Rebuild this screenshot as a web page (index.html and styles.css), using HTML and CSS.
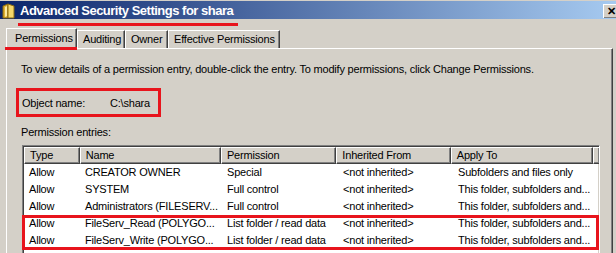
FILE: index.html
```html
<!DOCTYPE html>
<html>
<head>
<meta charset="utf-8">
<link rel="stylesheet" href="styles.css">
</head>
<body>
<div class="window">
  <div class="titlebar">
    <svg class="folder" width="14" height="16" viewBox="0 0 14 16">
      <path d="M1 3 L6 1 L6 15 L1 15 Z" fill="#e0b030" stroke="#8a6a10" stroke-width="1"/>
      <path d="M6 1 L12 3 L12 15 L6 15 Z" fill="#f5d76a" stroke="#8a6a10" stroke-width="1"/>
      <path d="M3 4 L5 3 L5 13 L3 14 Z" fill="#fbe9a0"/>
    </svg>
    <span class="title">Advanced Security Settings for shara</span>
    <span class="close">✕</span>
    <span class="mark mark-title"></span>
  </div>
  <div class="tabs">
    <div class="tab tab-perm active">Permissions<span class="mark mark-tab"></span></div>
    <div class="tab tab-aud">Auditing</div>
    <div class="tab tab-own">Owner</div>
    <div class="tab tab-eff">Effective Permissions</div>
  </div>
  <div class="panel">
    <p class="intro">To view details of a permission entry, double-click the entry. To modify permissions, click Change Permissions.</p>
    <div class="objname"><span class="objlabel">Object name:</span><span>C:\shara</span></div>
    <p class="entries">Permission entries:</p>
    <div class="list">
      <div class="row head">
        <div class="c c1">Type</div><div class="c c2">Name</div><div class="c c3">Permission</div><div class="c c4">Inherited From</div><div class="c c5">Apply To</div><div class="c filler"></div>
      </div>
      <div class="row"><div class="c c1">Allow</div><div class="c c2">CREATOR OWNER</div><div class="c c3">Special</div><div class="c c4">&lt;not inherited&gt;</div><div class="c c5">Subfolders and files only</div></div>
      <div class="row"><div class="c c1">Allow</div><div class="c c2">SYSTEM</div><div class="c c3">Full control</div><div class="c c4">&lt;not inherited&gt;</div><div class="c c5">This folder, subfolders and...</div></div>
      <div class="row"><div class="c c1">Allow</div><div class="c c2">Administrators (FILESERV...</div><div class="c c3">Full control</div><div class="c c4">&lt;not inherited&gt;</div><div class="c c5">This folder, subfolders and...</div></div>
      <div class="group">
        <div class="row"><div class="c c1">Allow</div><div class="c c2">FileServ_Read (POLYGO...</div><div class="c c3">List folder / read data</div><div class="c c4">&lt;not inherited&gt;</div><div class="c c5">This folder, subfolders and...</div></div>
        <div class="row"><div class="c c1">Allow</div><div class="c c2">FileServ_Write (POLYGO...</div><div class="c c3">List folder / read data</div><div class="c c4">&lt;not inherited&gt;</div><div class="c c5">This folder, subfolders and...</div></div>
      </div>
      <div class="row"></div>
    </div>
  </div>
</div>
</body>
</html>
```
FILE: styles.css
```css
html, body {
  margin: 0;
  padding: 0;
  height: 253px;
  overflow: hidden;
  background: #d4d0c8;
}
.window {
  font-family: "Liberation Sans", Arial, sans-serif;
  font-size: 11px;
  letter-spacing: -0.2px;
  color: #000;
  position: relative;
  padding-top: 1px;
  height: 252px;
  overflow: hidden;
}
.titlebar {
  position: relative;
  height: 18px;
  background: linear-gradient(to right, #0a246a, #a6caf0);
  display: flex;
  align-items: center;
}
.folder {
  margin-left: 2px;
  margin-top: 1px;
}
.title {
  margin-left: 4px;
  color: #fff;
  font-weight: bold;
  font-size: 13px;
  letter-spacing: -0.5px;
}
.close {
  margin-left: auto;
  width: 14px;
  height: 13px;
  margin-top: 1px;
  background: #d4d0c8;
  border-top: 1px solid #fff;
  border-left: 1px solid #fff;
  box-shadow: inset -1px -1px #808080;
  font-size: 11px;
  font-weight: bold;
  letter-spacing: 0;
  line-height: 13px;
  text-align: center;
  margin-right: -2px;
}
.mark {
  position: absolute;
  background: #e8141c;
}
.mark-title {
  left: 18px;
  top: 22px;
  width: 220px;
  height: 3px;
}
.tabs {
  display: flex;
  align-items: flex-end;
  margin-top: 9px;
  padding-left: 6px;
  height: 20px;
  position: relative;
  z-index: 1;
}
.tab {
  position: relative;
  height: 18px;
  line-height: 17px;
  border-top: 1px solid #fff;
  border-left: 1px solid #fff;
  border-right: 1px solid #404040;
  box-shadow: inset -1px 0 #808080;
  box-sizing: border-box;
  padding-left: 5px;
  white-space: nowrap;
}
.tab.active {
  height: 21px;
  margin-bottom: -1px;
  background: #d4d0c8;
  padding-left: 8px;
  line-height: 19px;
}
.tab-perm { width: 71px; }
.tab-aud { width: 48px; }
.tab-own { width: 43px; }
.tab-eff { width: 112px; }
.mark-tab {
  left: -2px;
  top: 18px;
  width: 72px;
  height: 3px;
}
.panel {
  margin-left: 6px;
  width: 607px;
  box-sizing: border-box;
  height: 300px;
  border-top: 1px solid #fff;
  border-left: 1px solid #fff;
  border-right: 1px solid #404040;
  box-shadow: inset -1px 0 #808080;
  padding: 0 0 0 9px;
}
.intro {
  margin: 14px 0 0 5px;
  line-height: 13px;
}
.objname {
  display: inline-flex;
  align-items: center;
  margin-top: 12px;
  border: 3px solid #e8141c;
  height: 23px;
  width: 136px;
  padding-left: 3px;
  box-sizing: content-box;
}
.objlabel { width: 88px; }
.entries {
  margin: 9px 0 0 5px;
  line-height: 13px;
}
.list {
  margin: 6px 0 0 6px;
  width: 578px;
  height: 200px;
  box-sizing: border-box;
  background: #fff;
  border-top: 1px solid #808080;
  border-left: 1px solid #808080;
  border-right: 1px solid #fff;
  box-shadow: inset 1px 1px #404040, inset -1px 0 #d4d0c8;
  padding: 1px 0 0 1px;
}
.row {
  display: flex;
  height: 17px;
  line-height: 17px;
}
.c {
  box-sizing: border-box;
  padding-left: 5px;
  white-space: nowrap;
  overflow: hidden;
}
.c1 { width: 56px; }
.c2 { width: 142px; }
.c3 { width: 116px; }
.c4 { width: 115px; }
.c5 { width: 143px; }
.head .c {
  background: #d4d0c8;
  border-top: 1px solid #fff;
  border-left: 1px solid #fff;
  border-right: 1px solid #404040;
  border-bottom: 1px solid #404040;
  box-shadow: inset -1px -1px #808080;
  line-height: 14px;
}
.head .filler {
  flex: 1;
  border-right: none;
}
.group {
  position: relative;
}
.group::after {
  content: "";
  position: absolute;
  left: -2px;
  right: 0;
  top: 0;
  bottom: -1px;
  border: 3px solid #e8141c;
}
```
